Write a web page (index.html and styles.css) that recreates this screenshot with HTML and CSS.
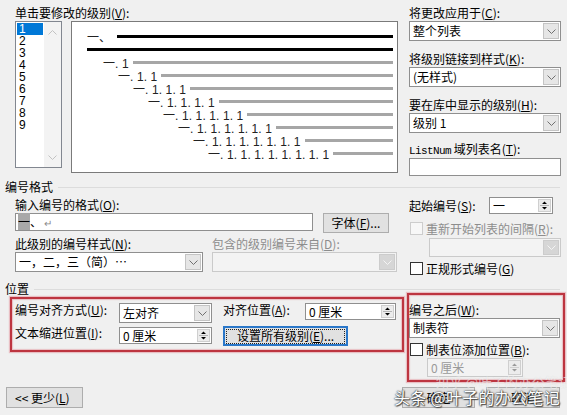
FILE: index.html
```html
<!DOCTYPE html>
<html lang="zh-CN">
<head>
<meta charset="UTF-8">
<title>定义新多级列表</title>
<link rel="stylesheet" href="styles.css">
</head>
<body>

<div class="dialog">

    <!-- level picker + preview -->
    <div class="levels">
        <div class="levels-main">
            <div class="lbl">单击要修改的级别(<u>V</u>):</div>
            <div class="level-pick">
                <div class="level-list">
                    <div class="level-items">
                        <div class="level-item sel">1</div>
                        <div class="level-item">2</div>
                        <div class="level-item">3</div>
                        <div class="level-item">4</div>
                        <div class="level-item">5</div>
                        <div class="level-item">6</div>
                        <div class="level-item">7</div>
                        <div class="level-item">8</div>
                        <div class="level-item">9</div>
                    </div>
                    <div class="level-scroll">
                        <svg width="9" height="5" viewBox="0 0 9 5"><polyline points="0.5,4.5 4.5,0.5 8.5,4.5" fill="none" stroke="#c2c2c2"/></svg>
                        <svg width="9" height="5" viewBox="0 0 9 5"><polyline points="0.5,0.5 4.5,4.5 8.5,0.5" fill="none" stroke="#c2c2c2"/></svg>
                    </div>
                </div>
                <div class="preview">
                    <div class="pv-row lv1"><span>一、</span><i class="pv-bar dark"></i></div>
                    <div class="pv-row lv1"><i class="pv-bar dark flush"></i></div>
                    <div class="pv-row lv2"><span>一. 1</span><i class="pv-bar"></i></div>
                    <div class="pv-row lv3"><span>一. 1. 1</span><i class="pv-bar"></i></div>
                    <div class="pv-row lv4"><span>一. 1. 1. 1</span><i class="pv-bar"></i></div>
                    <div class="pv-row lv5"><span>一. 1. 1. 1. 1</span><i class="pv-bar"></i></div>
                    <div class="pv-row lv6"><span>一. 1. 1. 1. 1. 1</span><i class="pv-bar"></i></div>
                    <div class="pv-row lv7"><span>一. 1. 1. 1. 1. 1. 1</span><i class="pv-bar"></i></div>
                    <div class="pv-row lv8"><span>一. 1. 1. 1. 1. 1. 1. 1</span><i class="pv-bar"></i></div>
                    <div class="pv-row lv9"><span>一. 1. 1. 1. 1. 1. 1. 1. 1</span><i class="pv-bar"></i></div>
                </div>
            </div>
        </div>

        <div class="side">
            <div class="lbl">将更改应用于(<u>C</u>):</div>
            <div class="combo">
                <span class="combo-text">整个列表</span>
                <span class="combo-btn"><svg width="9" height="5" viewBox="0 0 9 5"><polyline points="0.5,0.5 4.5,4.5 8.5,0.5" fill="none" stroke="#707070"/></svg></span>
            </div>
            <div class="lbl gap">将级别链接到样式(<u>K</u>):</div>
            <div class="combo">
                <span class="combo-text">(无样式)</span>
                <span class="combo-btn"><svg width="9" height="5" viewBox="0 0 9 5"><polyline points="0.5,0.5 4.5,4.5 8.5,0.5" fill="none" stroke="#707070"/></svg></span>
            </div>
            <div class="lbl gap">要在库中显示的级别(<u>H</u>):</div>
            <div class="combo">
                <span class="combo-text">级别 1</span>
                <span class="combo-btn"><svg width="9" height="5" viewBox="0 0 9 5"><polyline points="0.5,0.5 4.5,4.5 8.5,0.5" fill="none" stroke="#707070"/></svg></span>
            </div>
            <div class="lbl gap-sm"><span class="mono">ListNum</span> 域列表名(<u>T</u>):</div>
            <div class="text-input listnum"></div>
        </div>
    </div>

    <!-- number format -->
    <div class="group-title"><span>编号格式</span></div>
    <div class="format">
        <div class="format-main">
            <div class="lbl">输入编号的格式(<u>O</u>):</div>
            <div class="row">
                <div class="text-input fmt-input"><span class="hl">一</span>、<span class="ret">↵</span></div>
                <div class="btn font-btn">字体(<u>F</u>)...</div>
            </div>
            <div class="row labels-row">
                <div class="lbl style-lbl">此级别的编号样式(<u>N</u>):</div>
                <div class="lbl off">包含的级别编号来自(<u>D</u>):</div>
            </div>
            <div class="row">
                <div class="combo style-combo">
                    <span class="combo-text">一，二，三（简）…</span>
                    <span class="combo-btn"><svg width="9" height="5" viewBox="0 0 9 5"><polyline points="0.5,0.5 4.5,4.5 8.5,0.5" fill="none" stroke="#707070"/></svg></span>
                </div>
                <div class="combo disabled from-combo">
                    <span class="combo-text"></span>
                    <span class="combo-btn"><svg width="9" height="5" viewBox="0 0 9 5"><polyline points="0.5,0.5 4.5,4.5 8.5,0.5" fill="none" stroke="#f4f4f4"/></svg></span>
                </div>
            </div>
        </div>

        <div class="side">
            <div class="row start-row">
                <div class="lbl start-lbl">起始编号(<u>S</u>):</div>
                <div class="spin start-spin">
                    <span class="spin-text">一</span>
                    <span class="spin-btn"><svg width="9" height="13" viewBox="0 0 9 13"><path d="M2 5h5L4.5 2.5z M2 8h5L4.5 10.5z" fill="#000"/><line x1="0" y1="6.5" x2="9" y2="6.5" stroke="#b5b5b5"/></svg></span>
                </div>
            </div>
            <div class="check off restart">
                <span class="check-box"></span>重新开始列表的间隔(<u>R</u>):
            </div>
            <div class="combo disabled restart-combo">
                <span class="combo-text"></span>
                <span class="combo-btn"><svg width="9" height="5" viewBox="0 0 9 5"><polyline points="0.5,0.5 4.5,4.5 8.5,0.5" fill="none" stroke="#f4f4f4"/></svg></span>
            </div>
            <div class="check legal">
                <span class="check-box"></span>正规形式编号(<u>G</u>)
            </div>
        </div>
    </div>

    <!-- position -->
    <div class="group-title"><span>位置</span></div>
    <div class="position">
        <div class="mark mark-left">
            <div class="row pos-row">
                <div class="lbl pos-lbl">编号对齐方式(<u>U</u>):</div>
                <div class="combo pos-ctl">
                    <span class="combo-text">左对齐</span>
                    <span class="combo-btn"><svg width="9" height="5" viewBox="0 0 9 5"><polyline points="0.5,0.5 4.5,4.5 8.5,0.5" fill="none" stroke="#707070"/></svg></span>
                </div>
                <div class="lbl pos-lbl2">对齐位置(<u>A</u>):</div>
                <div class="spin at-spin">
                    <span class="spin-text">0 厘米</span>
                    <span class="spin-btn"><svg width="9" height="13" viewBox="0 0 9 13"><path d="M2 5h5L4.5 2.5z M2 8h5L4.5 10.5z" fill="#000"/><line x1="0" y1="6.5" x2="9" y2="6.5" stroke="#b5b5b5"/></svg></span>
                </div>
            </div>
            <div class="row pos-row second">
                <div class="lbl pos-lbl">文本缩进位置(<u>I</u>):</div>
                <div class="spin pos-ctl indent-spin">
                    <span class="spin-text">0 厘米</span>
                    <span class="spin-btn"><svg width="9" height="13" viewBox="0 0 9 13"><path d="M2 5h5L4.5 2.5z M2 8h5L4.5 10.5z" fill="#000"/><line x1="0" y1="6.5" x2="9" y2="6.5" stroke="#b5b5b5"/></svg></span>
                </div>
                <div class="btn btn-focus"><span>设置所有级别(<u>E</u>)...</span></div>
            </div>
        </div>

        <div class="mark mark-right">
            <div class="lbl">编号之后(<u>W</u>):</div>
            <div class="combo after-combo">
                <span class="combo-text">制表符</span>
                <span class="combo-btn"><svg width="9" height="5" viewBox="0 0 9 5"><polyline points="0.5,0.5 4.5,4.5 8.5,0.5" fill="none" stroke="#707070"/></svg></span>
            </div>
            <div class="check tabstop">
                <span class="check-box"></span>制表位添加位置(<u>B</u>):
            </div>
            <div class="spin disabled tab-spin">
                <span class="spin-text">0 厘米</span>
                <span class="spin-btn"><svg width="9" height="13" viewBox="0 0 9 13"><path d="M2 5h5L4.5 2.5z M2 8h5L4.5 10.5z" fill="#9a9a9a"/><line x1="0" y1="6.5" x2="9" y2="6.5" stroke="#d0d0d0"/></svg></span>
            </div>
        </div>
    </div>

    <div class="footer">
        <div class="btn btn-less">&lt;&lt; 更少(<u>L</u>)</div>
        <div class="btn btn-ok">确定</div>
        <div class="btn btn-cancel">取消</div>
    </div>

    <div class="stamp stamp-faint">知乎 @叶子的办公笔记</div>
    <div class="stamp">头条 @叶子的办公笔记</div>
</div>

</body>
</html>
```

FILE: styles.css
```css
* {
    box-sizing: border-box;
}

body {
    margin: 0;
    background: #f0f0f0;
    font-family: "Noto Sans CJK SC", sans-serif;
    font-size: 12px;
    color: #000;
}

.dialog {
    position: relative;
    width: 567px;
    height: 415px;
    overflow: hidden;
}

.lbl {
    height: 16px;
    line-height: 16px;
    white-space: nowrap;
}

.lbl.off,
.check.off {
    color: #8d8d8d;
}

.mono {
    font-family: "Liberation Mono", monospace;
    font-size: 11px;
    letter-spacing: -0.6px;
}

.row {
    display: flex;
    align-items: flex-start;
}

/* top part: level list and preview */
.levels {
    display: flex;
    height: 179px;
    padding: 5px 0 0 15px;
}

.levels-main {
    width: 383px;
}

.level-pick {
    display: flex;
    align-items: flex-start;
    gap: 9px;
}

.level-list {
    display: flex;
    width: 47px;
    height: 147px;
    border: 1px solid #828790;
    background: #fff;
}

.level-items {
    width: 28px;
    padding: 1px;
}

.level-item {
    height: 12px;
    line-height: 12px;
    padding-left: 2px;
    font-family: "Liberation Sans", sans-serif;
    font-size: 12px;
}

.level-item.sel {
    background: #0078d7;
    color: #fff;
}

.level-scroll {
    flex: 1;
    display: flex;
    flex-direction: column;
    justify-content: space-between;
    align-items: center;
    padding: 8px 0 7px;
    background: #f3f3f3;
}

.preview {
    width: 327px;
    height: 152px;
    padding: 8px 4px 0 0;
    border: 1px solid #7a7a7a;
    background: #fff;
}

.pv-row {
    display: flex;
    align-items: center;
    height: 13px;
    font-family: "Liberation Sans", "Noto Sans CJK SC", sans-serif;
    font-size: 12px;
    letter-spacing: 0.1px;
    color: #222;
    white-space: nowrap;
}

.pv-bar {
    flex: 1;
    height: 3px;
    margin-left: 4px;
    background: #a6a6a6;
}

.pv-bar.dark {
    margin-left: 6px;
    background: #000;
}

.pv-bar.flush {
    margin-left: 0;
}

.lv1 { padding-left: 15px; }
.lv2 { padding-left: 31px; }
.lv3 { padding-left: 46px; }
.lv4 { padding-left: 61px; }
.lv5 { padding-left: 76px; }
.lv6 { padding-left: 91px; }
.lv7 { padding-left: 106px; }
.lv8 { padding-left: 121px; }
.lv9 { padding-left: 136px; }

/* right hand column */
.side {
    width: 152px;
    margin-left: 11px;
}

.side .lbl.gap {
    margin-top: 10px;
}

.side .lbl.gap-sm {
    margin-top: 8px;
}

.side > .combo:first-of-type {
    margin-top: 1px;
}

/* controls */
.combo {
    display: flex;
    height: 20px;
    border: 1px solid #8f8f8f;
    background: #fff;
}

.combo-text {
    flex: 1;
    padding-left: 3px;
    line-height: 18px;
    white-space: nowrap;
    overflow: hidden;
}

.combo-btn {
    display: flex;
    align-items: center;
    justify-content: center;
    width: 16px;
    margin: 1px;
    border: 1px solid #c4c4c4;
    background: #e6e6e6;
}

.combo.disabled {
    border-color: #cacaca;
    background: #f3f3f3;
}

.combo.disabled .combo-btn {
    border-color: #cccccc;
    background: #d6d6d6;
}

.spin {
    display: flex;
    height: 17px;
    border: 1px solid #8f8f8f;
    background: #fff;
}

.spin-text {
    flex: 1;
    padding-left: 3px;
    line-height: 15px;
    white-space: nowrap;
}

.spin-btn {
    display: flex;
    align-items: center;
    justify-content: center;
    width: 13px;
    margin: 1px;
    border: 1px solid #cfcfcf;
    background: #ececec;
}

.spin.disabled {
    border-color: #cacaca;
    background: #f3f3f3;
    color: #9a9a9a;
}

.text-input {
    height: 18px;
    border: 1px solid #8f8f8f;
    background: #fff;
    padding-left: 2px;
    line-height: 16px;
    white-space: nowrap;
}

.listnum {
    margin-top: 1px;
}

.check {
    display: flex;
    align-items: center;
    height: 16px;
    white-space: nowrap;
}

.check-box {
    width: 13px;
    height: 13px;
    margin: 0 3px 0 1px;
    border: 1px solid #333;
    background: #fff;
}

.check.off .check-box {
    border-color: #cdcdcd;
    background: #f7f7f7;
}

.btn {
    height: 21px;
    border: 1px solid #adadad;
    background: #e1e1e1;
    text-align: center;
    line-height: 19px;
    white-space: nowrap;
}

.btn-focus {
    padding: 1px;
    border: 2px solid #2a77c9;
    line-height: 13px;
}

.btn-focus span {
    display: block;
    height: 15px;
    outline: 1px dotted #222;
    outline-offset: -1px;
}

/* group captions */
.group-title {
    display: flex;
    align-items: center;
    gap: 5px;
    height: 16px;
    padding: 0 7px 0 5px;
    line-height: 16px;
}

.group-title::after {
    content: "";
    flex: 1;
    height: 1px;
    background: #dcdcdc;
}

/* number format */
.format {
    display: flex;
    height: 86px;
    padding-left: 15px;
}

.format-main {
    width: 382px;
    padding-top: 2px;
}

.format .side {
    margin-left: 12px;
}

.fmt-input {
    width: 298px;
}

.fmt-input .hl {
    background: #a8a8a8;
}

.fmt-input .ret {
    margin-left: 2px;
    color: #8a8a8a;
    font-size: 10px;
}

.font-btn {
    width: 66px;
    height: 20px;
    margin-left: 10px;
    line-height: 18px;
}

.labels-row {
    margin-top: 3px;
}

.style-lbl {
    width: 197px;
}

.style-combo {
    width: 188px;
}

.from-combo {
    width: 185px;
    margin-left: 9px;
}

.start-row {
    align-items: center;
    margin-top: 2px;
}

.start-lbl {
    width: 80px;
}

.start-spin {
    width: 64px;
}

.restart {
    margin-top: 6px;
}

.restart-combo {
    width: 132px;
    height: 19px;
    margin: 2px 0 0 20px;
}

.legal {
    margin-top: 3px;
}

/* position */
.position {
    display: flex;
    align-items: flex-start;
    height: 85px;
    padding-left: 10px;
}

.mark {
    border: 2px solid #bd3540;
    box-shadow: 0 0 1px 1px rgba(225, 140, 150, 0.5), inset 0 0 1px 1px rgba(225, 140, 150, 0.5);
}

.mark-left {
    width: 394px;
    height: 55px;
    padding: 4px 0 0 3px;
}

.mark-right {
    width: 158px;
    height: 89px;
    margin: -4px 0 0 3px;
    padding: 7px 3px 0 0;
}

.pos-row {
    height: 20px;
}

.pos-row.second {
    margin-top: 3px;
}

.pos-lbl {
    width: 104px;
    line-height: 14px;
}

.pos-ctl {
    width: 93px;
}

.pos-lbl2 {
    width: 82px;
    margin-left: 11px;
    line-height: 14px;
}

.at-spin {
    width: 91px;
}

.indent-spin {
    margin-top: 1px;
}

.btn-focus {
    width: 125px;
    height: 20px;
    margin-left: 11px;
}

.after-combo {
    height: 20px;
}

.tabstop {
    margin-top: 3px;
}

.tab-spin {
    width: 96px;
    height: 19px;
    margin: 1px 0 0 18px;
}

.tab-spin .spin-text {
    line-height: 17px;
}

/* bottom buttons */
.footer {
    display: flex;
    margin-top: 5px;
    padding: 0 7px 0 6px;
}

.btn-less {
    width: 77px;
    text-align: left;
    padding-left: 8px;
}

.btn-ok {
    width: 73px;
    margin-left: auto;
}

.btn-cancel {
    width: 74px;
    margin-left: 11px;
}

/* watermarks laid over the dialog */
.stamp {
    position: absolute;
    left: 394px;
    top: 387px;
    font-size: 16px;
    line-height: 20px;
    color: #fff;
    letter-spacing: 0.3px;
    text-shadow: 0 0 1px #333, 0 0 2px #333, 1px 1px 1px #555;
    white-space: nowrap;
}

.stamp-faint {
    left: 436px;
    top: 375px;
    font-size: 13px;
    line-height: 14px;
    color: rgba(255, 255, 255, 0.55);
    text-shadow: 0 0 1px rgba(170, 170, 170, 0.3);
}
```
